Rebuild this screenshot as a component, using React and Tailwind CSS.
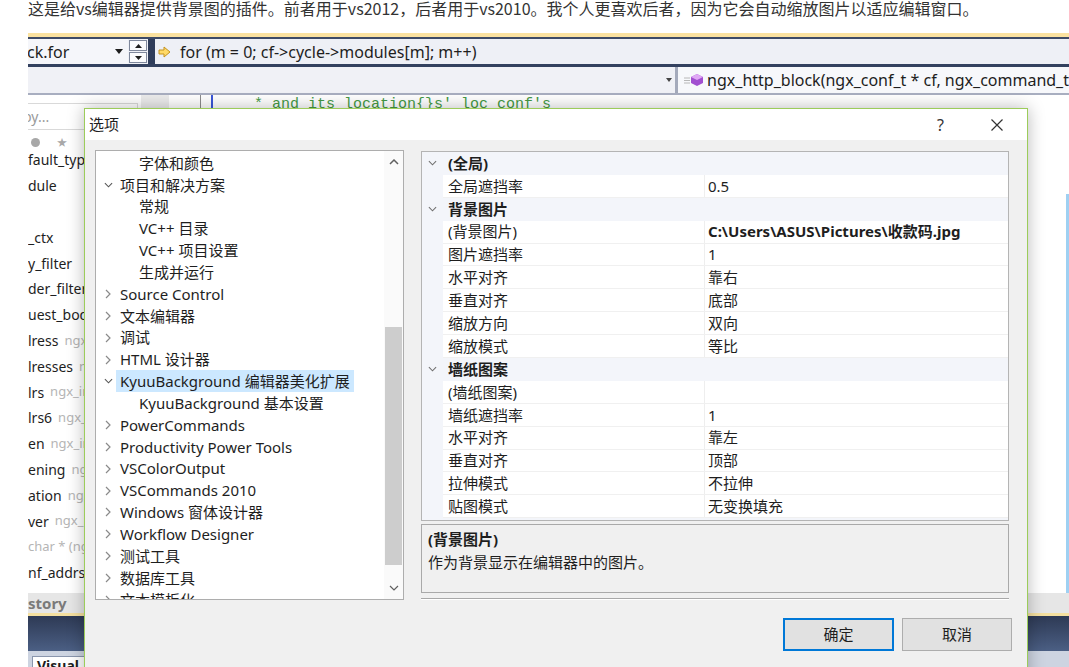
import React from 'react';

const UI = "font-['Noto_Sans','Noto_Sans_CJK_SC',sans-serif]";

function ChevronRight() {
  return (
    <svg width="6" height="10" viewBox="0 0 6 10">
      <path d="M1 1l4 4-4 4" fill="none" stroke="#8a8a8a" strokeWidth="1.2" />
    </svg>
  );
}

function ChevronDown({ color = '#606060', w = 10 }) {
  return (
    <svg width={w} height="6" viewBox="0 0 10 6">
      <path d="M1 1l4 4 4-4" fill="none" stroke={color} strokeWidth="1.2" />
    </svg>
  );
}

function ChevronUp() {
  return (
    <svg width="10" height="6" viewBox="0 0 10 6">
      <path d="M1 5l4-4 4 4" fill="none" stroke="#606060" strokeWidth="1.5" />
    </svg>
  );
}

const treeItems = [
  { label: '字体和颜色', level: 2 },
  { label: '项目和解决方案', level: 1, open: true },
  { label: '常规', level: 2 },
  { label: 'VC++ 目录', level: 2 },
  { label: 'VC++ 项目设置', level: 2 },
  { label: '生成并运行', level: 2 },
  { label: 'Source Control', level: 1 },
  { label: '文本编辑器', level: 1 },
  { label: '调试', level: 1 },
  { label: 'HTML 设计器', level: 1 },
  { label: 'KyuuBackground 编辑器美化扩展', level: 1, open: true, selected: true },
  { label: 'KyuuBackground 基本设置', level: 2 },
  { label: 'PowerCommands', level: 1 },
  { label: 'Productivity Power Tools', level: 1 },
  { label: 'VSColorOutput', level: 1 },
  { label: 'VSCommands 2010', level: 1 },
  { label: 'Windows 窗体设计器', level: 1 },
  { label: 'Workflow Designer', level: 1 },
  { label: '测试工具', level: 1 },
  { label: '数据库工具', level: 1 },
  { label: '文本模板化', level: 1 },
];

const props = [
  { cat: '(全局)' },
  { n: '全局遮挡率', v: '0.5' },
  { cat: '背景图片' },
  { n: '(背景图片)', v: 'C:\\Users\\ASUS\\Pictures\\收款码.jpg', bold: true },
  { n: '图片遮挡率', v: '1' },
  { n: '水平对齐', v: '靠右' },
  { n: '垂直对齐', v: '底部' },
  { n: '缩放方向', v: '双向' },
  { n: '缩放模式', v: '等比' },
  { cat: '墙纸图案' },
  { n: '(墙纸图案)', v: '' },
  { n: '墙纸遮挡率', v: '1' },
  { n: '水平对齐', v: '靠左' },
  { n: '垂直对齐', v: '顶部' },
  { n: '拉伸模式', v: '不拉伸' },
  { n: '贴图模式', v: '无变换填充' },
];

const leftItems = [
  ['fault_types', ''],
  ['dule', ''],
  ['', ''],
  ['_ctx', ''],
  ['y_filter', ''],
  ['der_filter', ''],
  ['uest_body', ''],
  ['lress', 'ngx_i'],
  ['lresses', 'ngx_'],
  ['lrs', 'ngx_int_'],
  ['lrs6', 'ngx_in'],
  ['en', 'ngx_int_'],
  ['ening', 'ngx_'],
  ['ation', 'ngx_i'],
  ['ver', 'ngx_int'],
  ['', 'char * (ngx_'],
  ['nf_addrs', 'n'],
];

function TreeRow({ item }) {
  return (
    <div className="h-[21.85px] flex items-center whitespace-nowrap">
      {item.level === 1 ? (
        <div className="w-[24px] flex justify-center">
          {item.open ? <ChevronDown color="#555" w={9} /> : <ChevronRight />}
        </div>
      ) : (
        <div className="w-[43px] shrink-0" />
      )}
      <span
        className={`h-full flex items-center px-[4px] -ml-[4px] ${item.selected ? 'bg-[#cce8ff]' : ''}`}
      >
        {item.label}
      </span>
    </div>
  );
}

function PropRow({ p }) {
  if (p.cat) {
    return (
      <div className="h-[22.9px] flex items-center">
        <div className="w-[21px] flex justify-center">
          <ChevronDown color="#707070" w={9} />
        </div>
        <span className="ml-[5px] font-bold">{p.cat}</span>
      </div>
    );
  }
  return (
    <div className="h-[22.9px] flex">
      <div className="w-[21px] shrink-0" />
      <div className="flex-1 flex bg-white border-b border-[#f0f0f0]">
        <div className="w-[262px] border-r border-[#eeeeee] pl-[5px] flex items-center">{p.n}</div>
        <div className={`flex-1 pl-[3px] flex items-center ${p.bold ? 'font-bold' : ''}`}>{p.v}</div>
      </div>
    </div>
  );
}

export default function App() {
  return (
    <div className="w-[1069px] h-[667px] overflow-hidden bg-white">
      <div className="h-[33px] pl-[28px] text-[16px] leading-[16px] text-[#333] whitespace-nowrap font-['Noto_Sans_CJK_SC','Noto_Sans',sans-serif]">
        这是给vs编辑器提供背景图的插件。前者用于vs2012，后者用于vs2010。我个人更喜欢后者，因为它会自动缩放图片以适应编辑窗口。
      </div>

      <div className={`ml-[28px] h-[634px] relative overflow-hidden text-[#1e1e1e] ${UI}`}>
        <div className="h-[4px] bg-[#fbe2a0]" />
        <div className="h-[2px] bg-[#3e4b66]" />

        {/* navigation bar, row 1 */}
        <div className="h-[25px] flex">
          <div className="w-[100px] bg-[#f5f6fa] flex items-center relative overflow-hidden">
            <span className="text-[16px] -ml-[1px]">ck.for</span>
            <svg className="absolute right-[5px] top-[10px]" width="8" height="5" viewBox="0 0 8 5">
              <path d="M0 0h8L4 5z" fill="#1e1e1e" />
            </svg>
          </div>
          <div className="w-[20px] bg-[#eef0f6] flex flex-col justify-center gap-[1px] px-[1px]">
            <div className="h-[11px] border border-[#7f889c] bg-[#fafbfd] flex items-center justify-center">
              <svg width="7" height="4" viewBox="0 0 7 4"><path d="M0 4h7L3.5 0z" fill="#1e1e1e" /></svg>
            </div>
            <div className="h-[11px] border border-[#7f889c] bg-[#fafbfd] flex items-center justify-center">
              <svg width="7" height="4" viewBox="0 0 7 4"><path d="M0 0h7L3.5 4z" fill="#1e1e1e" /></svg>
            </div>
          </div>
          <div className="w-[7px] bg-[#2f3d5b]" />
          <div className="flex-1 bg-[#eef0f6] flex items-center pl-[3px]">
            <svg width="13" height="12" viewBox="0 0 13 12">
              <path d="M1 4h5V1l6 5-6 5V8H1z" fill="#ffd966" stroke="#c49320" strokeWidth="1" />
            </svg>
            <span className="ml-[9px] text-[16px]">for (m = 0; cf-&gt;cycle-&gt;modules[m]; m++)</span>
          </div>
        </div>
        <div className="h-[3px] bg-[#33415f]" />

        {/* navigation bar, row 2 */}
        <div className="h-[26px] flex bg-[#f0f1f6]">
          <div className="w-[657px] flex items-center justify-end pr-[3px]">
            <svg width="6" height="4" viewBox="0 0 6 4"><path d="M0 0h6L3 4z" fill="#444" /></svg>
          </div>
          <div className="w-[3px] bg-[#a4aabb]" />
          <div className="flex-1 bg-[#f7f8fb] flex items-center pl-[5px] whitespace-nowrap">
            <svg width="22" height="14" viewBox="0 0 22 14">
              <path d="M1 5h6M1 7.5h6M1 10h6" stroke="#b8b8b8" strokeWidth="1" />
              <path d="M14 1l6 3v6l-6 3-6-3V4z" fill="#a24fd0" />
              <path d="M14 1l6 3-6 3-6-3z" fill="#e0a8f5" />
            </svg>
            <span className="ml-[2px] text-[16px]">ngx_http_block(ngx_conf_t * cf, ngx_command_t</span>
          </div>
        </div>
        <div className="h-[2px] bg-[#a8aec0]" />

        {/* IDE body */}
        <div className="h-[498px] flex">
          <div className="w-[113px] bg-white overflow-hidden text-[14px]">
            <div className="mt-[8px] h-[27px] w-[110px] border border-l-0 border-[#d9d9d9] flex items-center text-[14px] text-[#9a9a9a]">
              <span className="-ml-[5px]">by...</span>
            </div>
            <div className="mt-[4px] h-[16px] flex items-center pl-[3px] gap-[17px]">
              <div className="w-[9px] h-[9px] rounded-full bg-[#a8a8a8]" />
              <span className="text-[10px] text-[#a8a8a8] leading-none">★</span>
            </div>
            <div className="-mt-[3px]">
              {leftItems.map(([a, b], i) => (
                <div key={i} className="h-[25.8px] flex items-center whitespace-nowrap">
                  <span>{a}</span>
                  {b && <span className={`text-[#b5b5b5] text-[13px] ${a ? 'ml-[6px]' : ''}`}>{b}</span>}
                </div>
              ))}
            </div>
          </div>
          <div className="w-[28px] bg-[#ebebeb]" />
          <div className="flex-1 flex bg-white">
            <div className="w-[31px]" />
            <div className="w-px bg-[#8c8c8c]" />
            <div className="w-[10px]" />
            <div className="w-[2px] bg-[#3a57d8]" />
            <div className="flex-1 pl-[41px] pt-[1px] leading-[18px] text-[15px] text-[#459a45] whitespace-nowrap font-['Liberation_Mono',monospace]">
              * and its location{'{}'}s' loc_conf's
            </div>
            <div className="w-[3px] flex flex-col">
              <div className="h-[99px]" />
              <div className="flex-1 bg-[#9fd0f2]" />
            </div>
          </div>
        </div>

        {/* bottom tool windows */}
        <div className="h-[20px] bg-[#e6e6e6] flex items-center">
          <span className="text-[15px] font-bold text-[#7a7a7a]">story</span>
        </div>
        <div className="h-[3px] bg-[#f5e0a0]" />
        <div className="h-[35px] bg-linear-to-b from-[#2e3a55] to-[#4b5f84]" />
        <div className="h-[16px] bg-[#cdd4e1] pl-[4px] pt-[5px]">
          <div className="w-[70px] h-[20px] bg-white border border-[#8a96ad] pl-[4px] text-[14px] font-bold leading-[18px]">Visual</div>
        </div>

        {/* options dialog */}
        <div className="absolute left-[56px] top-[75px] w-[944px] h-[600px] border border-[#9ccc5a] bg-[#f0f0f0] shadow-[0_0_16px_rgba(0,0,0,0.28)] text-[15px]">
          <div className="h-[31px] bg-white flex items-center">
            <span className="pl-[4px]">选项</span>
            <span className="ml-auto text-[16px] text-[#333]">?</span>
            <svg className="ml-[47px] mr-[24px]" width="12" height="12" viewBox="0 0 12 12">
              <path d="M0.5 0.5l11 11M11.5 0.5l-11 11" stroke="#333" strokeWidth="1.2" />
            </svg>
          </div>

          <div className="flex pl-[10px] pt-[10px]">
            {/* tree */}
            <div className="w-[309px] h-[450px] border border-[#adadad] bg-white flex">
              <div className="flex-1 overflow-hidden pt-[1px]">
                {treeItems.map((it, i) => (
                  <TreeRow key={i} item={it} />
                ))}
              </div>
              <div className="w-[19px] bg-[#fafafa] flex flex-col">
                <div className="h-[22px] flex items-center justify-center"><ChevronUp /></div>
                <div className="h-[154px]" />
                <div className="h-[238px] mx-[1px] bg-[#cdcdcd]" />
                <div className="flex-1" />
                <div className="h-[22px] flex items-center justify-center"><ChevronDown /></div>
              </div>
            </div>

            {/* property grid column */}
            <div className="ml-[17px] w-[588px] pt-[1px]">
              <div className="h-[370px] border border-[#b4b4b4] bg-[#f3f5fa] overflow-hidden">
                {props.map((p, i) => (
                  <PropRow key={i} p={p} />
                ))}
              </div>
              <div className="mt-[3px] h-[69px] border border-[#a9a9a9] pl-[6px] pt-[3px] leading-[23px]">
                <div className="font-bold">(背景图片)</div>
                <div>作为背景显示在编辑器中的图片。</div>
              </div>
              <div className="mt-[5px] h-[2px] border-t border-[#a8a8a8] border-b border-b-white" />
              <div className="mt-[18px] flex justify-end gap-[8px] -mr-[3px]">
                <button className="w-[111px] h-[33px] border-2 border-[#0078d7] bg-[#e1e1e1]">确定</button>
                <button className="w-[110px] h-[33px] border border-[#adadad] bg-[#e1e1e1]">取消</button>
              </div>
            </div>
          </div>
        </div>
      </div>
    </div>
  );
}
